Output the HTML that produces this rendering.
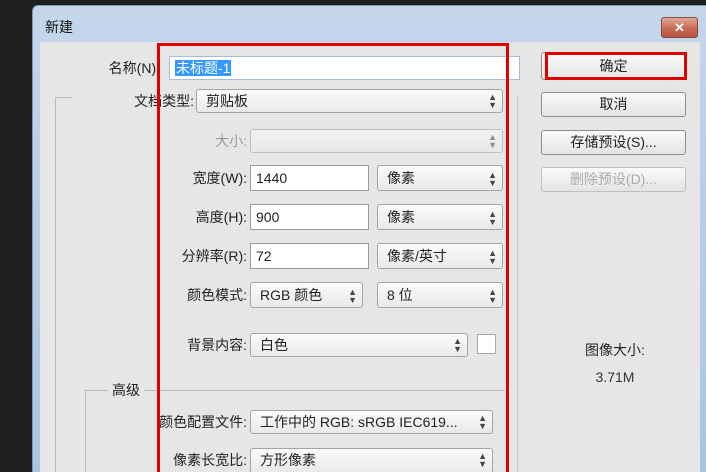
<!DOCTYPE html>
<html><head><meta charset="utf-8"><style>
*{margin:0;padding:0;box-sizing:border-box}
html,body{width:706px;height:472px;overflow:hidden}
body{background:#1e1e1e;position:relative;font-family:"Liberation Sans","Noto Sans CJK SC",sans-serif;font-size:14px;color:#222}
.a{position:absolute}
.dlg{left:32px;top:5px;width:674px;height:467px;background:linear-gradient(#c4d6ea,#a9c4e2);border-radius:6px 0 0 0;border:1px solid #7f96b0;border-bottom:none;border-right:none}
.client{left:40px;top:42px;width:660px;height:430px;background:#e6e6e6}
.lbl{text-align:right;white-space:nowrap;line-height:20px}
.in{background:#fff;border:1px solid #9a9a9a;padding-left:5px;font-size:14px}
.sel{background:linear-gradient(#fbfbfb,#e9e9e9);border:1px solid #a4a4a4;border-radius:3px;padding-left:9px;font-size:14px}
.ar{position:absolute;right:5px;top:3px;font-size:9px;line-height:8px;color:#444;text-align:center}
.btn{left:541px;width:145px;background:linear-gradient(#fafafa,#e4e4e4);border:1px solid #8f8f8f;border-radius:3px;text-align:center;font-size:14px}
.red{border:3px solid #e00000}
</style></head><body>
<div class="a dlg"></div>
<div class="a" style="left:45px;top:17px;font-size:14px;color:#111">新建</div>
<div class="a" style="left:661px;top:17px;width:37px;height:21px;border-radius:3px;border:1px solid #8a4a40;background:linear-gradient(#e0a898,#c86a56 55%,#b85440);color:#fff;font-weight:bold;text-align:center;line-height:19px;font-size:13px">✕</div>
<div class="a client"></div>
<div class="a" style="left:55px;top:97px;width:17px;height:375px;border-left:1px solid #bbb;border-top:1px solid #bbb"></div>
<div class="a" style="left:85px;top:390px;width:420px;height:82px;border-left:1px solid #bbb;border-top:1px solid #bbb"></div>
<div class="a" style="left:108px;top:380px;background:#e6e6e6;padding:0 4px;line-height:20px">高级</div>
<div class="a" style="left:517px;top:95px;width:1px;height:377px;background:#c8c8c8"></div>

<div class="a lbl" style="right:546px;top:58px">名称(N):</div>
<div class="a in" style="left:169px;top:56px;width:351px;height:24px;line-height:22px;border-color:#a8bcd6"><span style="background:#3399ff;color:#fff;padding:0 1px">未标题-1</span></div>

<div class="a lbl" style="right:512px;top:91px">文档类型:</div>
<div class="a sel" style="left:196px;top:89px;width:307px;height:24px;line-height:22px">剪贴板<span class="ar">▲<br>▼</span></div>

<div class="a lbl" style="right:459px;top:131px;color:#999">大小:</div>
<div class="a sel" style="left:250px;top:129px;width:253px;height:24px;opacity:.55"><span class="ar">▲<br>▼</span></div>

<div class="a lbl" style="right:459px;top:168px">宽度(W):</div>
<div class="a in" style="left:250px;top:165px;width:119px;height:26px;line-height:25px">1440</div>
<div class="a sel" style="left:377px;top:165px;width:126px;height:26px;line-height:24px">像素<span class="ar" style="top:5px">▲<br>▼</span></div>

<div class="a lbl" style="right:459px;top:207px">高度(H):</div>
<div class="a in" style="left:250px;top:204px;width:119px;height:26px;line-height:25px">900</div>
<div class="a sel" style="left:377px;top:204px;width:126px;height:26px;line-height:24px">像素<span class="ar" style="top:5px">▲<br>▼</span></div>

<div class="a lbl" style="right:459px;top:246px">分辨率(R):</div>
<div class="a in" style="left:250px;top:243px;width:119px;height:26px;line-height:25px">72</div>
<div class="a sel" style="left:377px;top:243px;width:126px;height:26px;line-height:24px">像素/英寸<span class="ar" style="top:5px">▲<br>▼</span></div>

<div class="a lbl" style="right:459px;top:285px">颜色模式:</div>
<div class="a sel" style="left:250px;top:282px;width:113px;height:26px;line-height:24px">RGB 颜色<span class="ar" style="top:5px">▲<br>▼</span></div>
<div class="a sel" style="left:377px;top:282px;width:126px;height:26px;line-height:24px">8 位<span class="ar" style="top:5px">▲<br>▼</span></div>

<div class="a lbl" style="right:459px;top:335px">背景内容:</div>
<div class="a sel" style="left:250px;top:333px;width:218px;height:24px;line-height:22px">白色<span class="ar">▲<br>▼</span></div>
<div class="a" style="left:477px;top:334px;width:19px;height:20px;background:#fff;border:1px solid #aaa"></div>

<div class="a lbl" style="right:459px;top:412px">颜色配置文件:</div>
<div class="a sel" style="left:250px;top:410px;width:243px;height:24px;line-height:22px">工作中的 RGB: sRGB IEC619...<span class="ar">▲<br>▼</span></div>
<div class="a lbl" style="right:459px;top:450px">像素长宽比:</div>
<div class="a sel" style="left:250px;top:448px;width:243px;height:24px;line-height:22px;border-bottom:none;border-radius:3px 3px 0 0">方形像素<span class="ar">▲<br>▼</span></div>

<div class="a btn" style="top:52px;height:28px;line-height:26px">确定</div>
<div class="a btn" style="top:92px;height:25px;line-height:23px">取消</div>
<div class="a btn" style="top:130px;height:25px;line-height:23px">存储预设(S)...</div>
<div class="a btn" style="top:167px;height:25px;line-height:23px;color:#aaa;border-color:#c0c0c0">删除预设(D)...</div>

<div class="a" style="left:560px;top:340px;width:110px;text-align:center;line-height:20px">图像大小:</div>
<div class="a" style="left:560px;top:367px;width:110px;text-align:center;line-height:20px;color:#333">3.71M</div>

<div class="a red" style="left:157px;top:43px;width:352px;height:429px;border-bottom:none"></div>
<div class="a red" style="left:545px;top:52px;width:142px;height:28px"></div>
</body></html>
